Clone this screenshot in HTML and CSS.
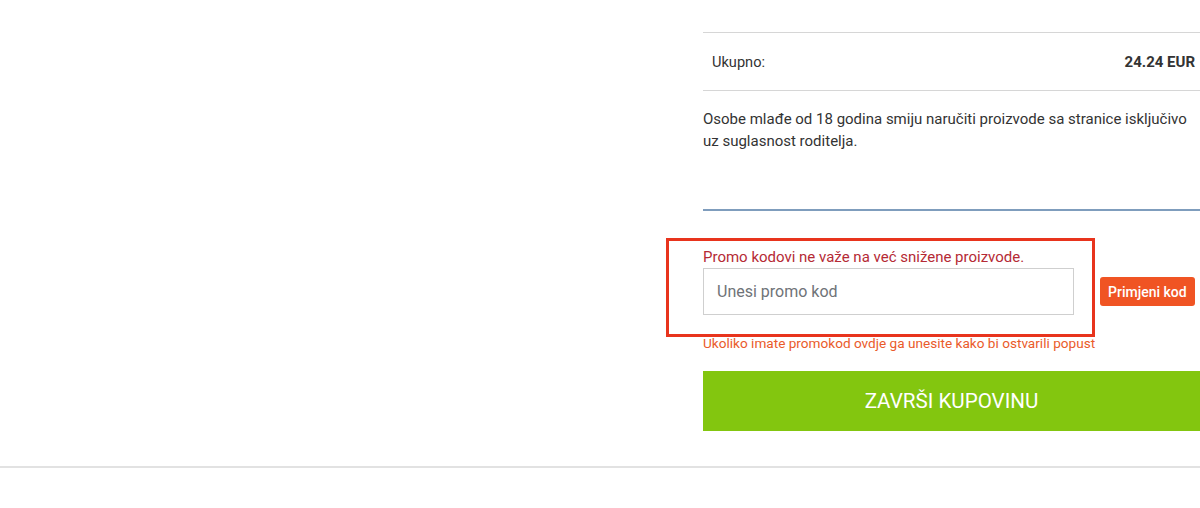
FILE: index.html
```html
<!DOCTYPE html>
<html lang="hr">
<head>
<meta charset="utf-8">
<title>Košarica</title>
<link rel="stylesheet" href="styles.css">
</head>
<body>
<div class="page">
  <div class="left"></div>
  <div class="summary">
    <div class="total-row">
      <span class="total-label">Ukupno:</span>
      <span class="total-value">24.24 EUR</span>
    </div>
    <p class="notice">Osobe mlađe od 18 godina smiju naručiti proizvode sa stranice isključivo uz suglasnost roditelja.</p>
    <div class="divider"></div>
    <div class="promo">
      <div class="promo-warning">Promo kodovi ne važe na već snižene proizvode.</div>
      <div class="promo-row">
        <input class="promo-input" type="text" placeholder="Unesi promo kod">
        <button class="promo-btn" type="button">Primjeni kod</button>
      </div>
      <div class="promo-help">Ukoliko imate promokod ovdje ga unesite kako bi ostvarili popust</div>
      <div class="highlight"></div>
    </div>
    <button class="checkout" type="button">ZAVRŠI KUPOVINU</button>
  </div>
</div>
<div class="footer-line"></div>
</body>
</html>
```

FILE: styles.css
```css
* { box-sizing: border-box; }
html, body { margin: 0; padding: 0; background: #fff; }
body {
  font-family: Roboto, "Liberation Sans", Arial, sans-serif;
  color: #333;
  overflow: hidden;
}
.page {
  display: grid;
  grid-template-columns: 703px 497px;
  padding-top: 32px;
}
.summary {
  display: flex;
  flex-direction: column;
}
.total-row {
  display: flex;
  justify-content: space-between;
  align-items: center;
  height: 59px;
  padding: 0 5px 0 9px;
  border-top: 1px solid #d6d6d6;
  border-bottom: 1px solid #d6d6d6;
  font-size: 14.6px;
  color: #333;
}
.total-value { font-weight: 700; color: #333; font-size: 15px; }
.notice {
  margin: 17px 0 0;
  font-size: 15px;
  line-height: 22px;
  color: #333;
  padding-right: 8px;
}
.divider {
  margin-top: 57px;
  height: 2px;
  background: #7f9dbd;
}
.promo {
  position: relative;
  margin-top: 36px;
}
.promo-warning {
  font-size: 15px;
  line-height: 20px;
  color: #b52a35;
}
.promo-row {
  display: flex;
  align-items: center;
  gap: 26px;
  margin-top: 1px;
}
.promo-input {
  width: 371px;
  height: 47px;
  border: 1px solid #cfcfcf;
  border-radius: 0;
  padding: 0 13px;
  font-family: inherit;
  font-size: 16px;
  color: #333;
  outline: none;
}
.promo-input::placeholder { color: #6f7378; }
.promo-btn {
  height: 29px;
  padding: 0 8px;
  border: none;
  border-radius: 3px;
  background: #f05423;
  color: #fff;
  font-family: inherit;
  font-size: 14px;
  font-weight: 500;
}
.promo-help {
  margin-top: 18px;
  font-size: 13.6px;
  line-height: 20px;
  color: #ea5b2a;
}
.highlight {
  position: absolute;
  left: -37px;
  top: -9px;
  width: 429px;
  height: 99px;
  border: 3px solid #e8341d;
  pointer-events: none;
}
.checkout {
  margin-top: 18px;
  height: 60px;
  width: 100%;
  border: none;
  background: #83c60f;
  color: #fff;
  font-family: inherit;
  font-size: 20.6px;
  font-weight: 400;
}
.footer-line {
  margin-top: 35px;
  height: 2px;
  background: #e2e2e2;
}
```
